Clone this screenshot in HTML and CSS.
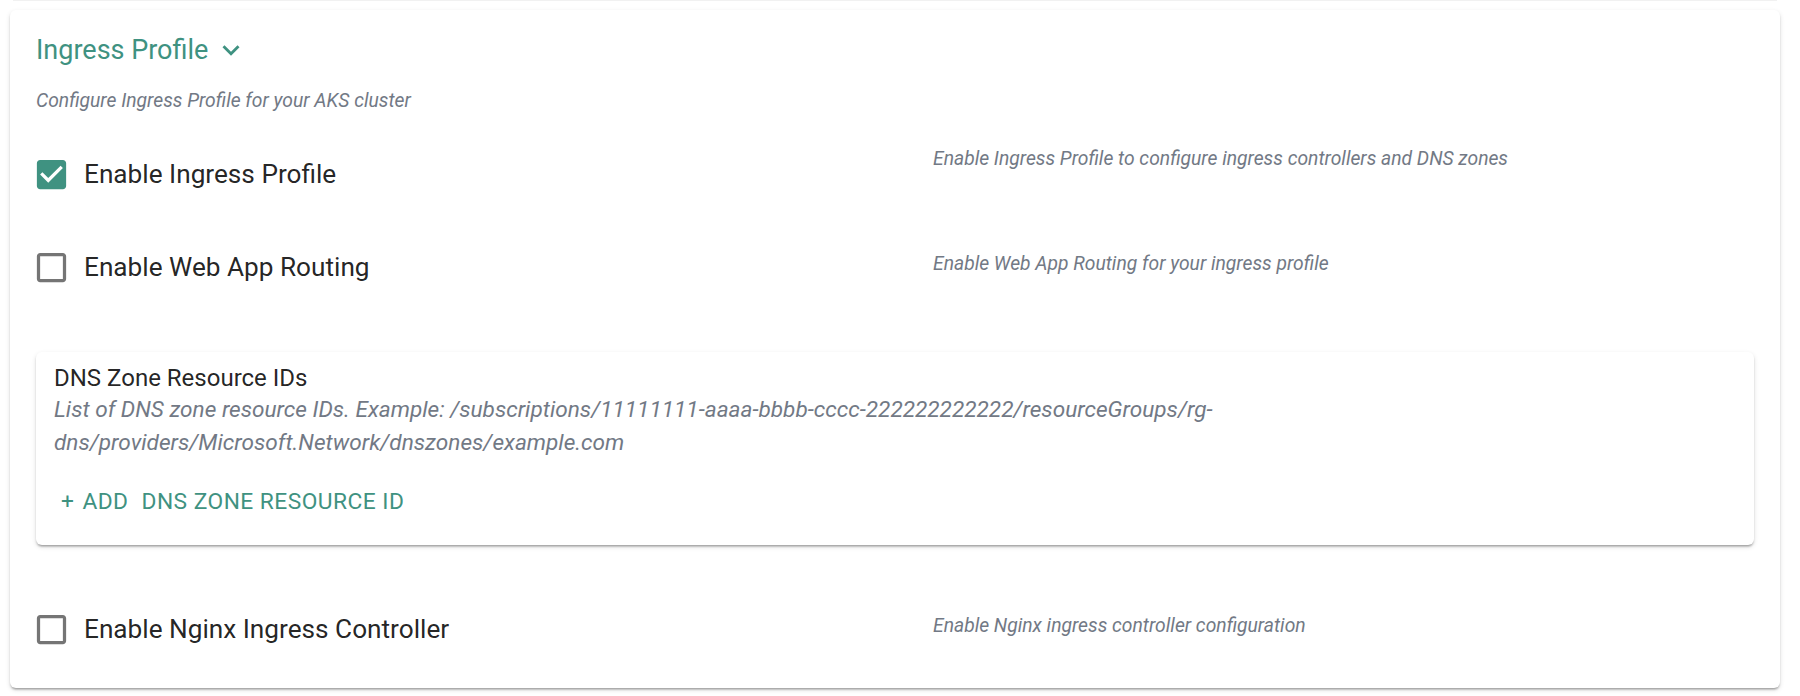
FILE: index.html
```html
<!DOCTYPE html>
<html lang="en">
<head>
<meta charset="utf-8">
<title>Ingress Profile</title>
<link rel="stylesheet" href="styles.css">
</head>
<body>
<div class="page">
  <div class="prev-edge"></div>
  <section class="card">
    <header class="section-head">
      <h2 class="section-title">Ingress Profile</h2>
      <svg class="chevron" viewBox="0 0 24 24" aria-hidden="true"><path d="M16.59 8.59 12 13.17 7.41 8.59 6 10l6 6 6-6z"/></svg>
    </header>
    <p class="section-sub">Configure Ingress Profile for your AKS cluster</p>

    <div class="field-row first">
      <label class="check-label">
        <svg class="check-icon checked" viewBox="0 0 24 24" aria-hidden="true"><path d="M19 3H5c-1.11 0-2 .9-2 2v14c0 1.1.89 2 2 2h14c1.11 0 2-.9 2-2V5c0-1.1-.89-2-2-2zm-9 14l-5-5 1.41-1.41L10 14.17l7.59-7.59L19 8l-9 9z"/></svg>
        <span class="check-text">Enable Ingress Profile</span>
      </label>
      <p class="field-desc raised">Enable Ingress Profile to configure ingress controllers and DNS zones</p>
    </div>

    <div class="field-row">
      <label class="check-label">
        <svg class="check-icon" viewBox="0 0 24 24" aria-hidden="true"><path d="M19 5v14H5V5h14m0-2H5c-1.1 0-2 .9-2 2v14c0 1.1.9 2 2 2h14c1.1 0 2-.9 2-2V5c0-1.1-.9-2-2-2z"/></svg>
        <span class="check-text">Enable Web App Routing</span>
      </label>
      <p class="field-desc">Enable Web App Routing for your ingress profile</p>
    </div>

    <div class="sub-card">
      <h3 class="sub-title">DNS Zone Resource IDs</h3>
      <p class="sub-help">List of DNS zone resource IDs. Example: /subscriptions/11111111-aaaa-bbbb-cccc-222222222222/resourceGroups/rg-dns/providers/Microsoft.Network/dnszones/example.com</p>
      <button class="add-btn" type="button"><span class="add-plus">+</span><span class="add-word">Add</span><span>DNS Zone Resource ID</span></button>
    </div>

    <div class="field-row last">
      <label class="check-label">
        <svg class="check-icon" viewBox="0 0 24 24" aria-hidden="true"><path d="M19 5v14H5V5h14m0-2H5c-1.1 0-2 .9-2 2v14c0 1.1.9 2 2 2h14c1.1 0 2-.9 2-2V5c0-1.1-.9-2-2-2z"/></svg>
        <span class="check-text">Enable Nginx Ingress Controller</span>
      </label>
      <p class="field-desc">Enable Nginx ingress controller configuration</p>
    </div>
  </section>
</div>
</body>
</html>
```

FILE: styles.css
```css
* { box-sizing: border-box; }

html, body {
  margin: 0;
  background: #ffffff;
}

body {
  font-family: Roboto, "Liberation Sans", Arial, sans-serif;
  color: rgba(0, 0, 0, 0.87);
}

.page {
  padding: 0 20px 7px 10px;
}

.prev-edge {
  height: 1px;
  margin: 0 3px;
  background: #f1f1f1;
}

.card {
  margin-top: 9px;
  background: #ffffff;
  border-radius: 6px;
  box-shadow: 0 3px 2px -2px rgba(0, 0, 0, 0.2), 0 2px 2px 0 rgba(0, 0, 0, 0.14), 0 2px 5px 0 rgba(0, 0, 0, 0.12);
  padding: 24px 26px 25px;
}

.section-head {
  display: flex;
  align-items: center;
  height: 32px;
}

.section-title {
  margin: 0;
  font-size: 27px;
  line-height: 32px;
  font-weight: 400;
  color: #3f9281;
}

.chevron {
  width: 34px;
  height: 34px;
  margin-left: 6px;
  fill: #3f9281;
}

.section-sub {
  margin: 23px 0 0;
  font-size: 19.3px;
  line-height: 24px;
  font-style: italic;
  color: #727985;
}

.field-row {
  display: grid;
  grid-template-columns: 897px 1fr;
  align-items: start;
  margin-top: 25px;
}

.field-row.first { margin-top: 27px; }
.field-row.last { margin-top: 50px; }

.check-label {
  display: flex;
  align-items: center;
  height: 68px;
}

.check-icon {
  width: 39px;
  height: 39px;
  margin-left: -4px;
  flex: none;
  fill: rgba(0, 0, 0, 0.54);
}

.check-icon.checked { fill: #3f9281; }

.check-text {
  margin-left: 13px;
  font-size: 26.2px;
  line-height: 36px;
}

.field-desc {
  margin: 0;
  padding-top: 19px;
  font-size: 19.3px;
  line-height: 24px;
  font-style: italic;
  color: #727985;
}

.field-desc.raised { padding-top: 7px; }

.sub-card {
  margin-top: 51px;
  background: #ffffff;
  border-radius: 6px;
  box-shadow: 0 3px 2px -2px rgba(0, 0, 0, 0.2), 0 2px 2px 0 rgba(0, 0, 0, 0.14), 0 2px 5px 0 rgba(0, 0, 0, 0.12);
  padding: 12px 17px 13px 18px;
}

.sub-title {
  margin: 0;
  font-size: 24px;
  line-height: 28px;
  font-weight: 400;
}

.sub-help {
  margin: 1px 0 0;
  font-size: 22.6px;
  line-height: 33px;
  font-style: italic;
  color: #727985;
}

.add-btn {
  display: flex;
  align-items: center;
  margin-top: 13px;
  margin-left: -1px;
  padding: 10px 8px;
  border: 0;
  background: none;
  font-family: inherit;
  font-size: 22.75px;
  font-weight: 400;
  line-height: 40px;
  letter-spacing: 0.47px;
  text-transform: uppercase;
  color: #3f9281;
}

.add-plus { margin-right: 8px; }
.add-word { margin-right: 13px; }
```
